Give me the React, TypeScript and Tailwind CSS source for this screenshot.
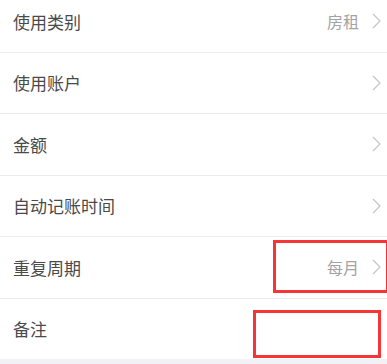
import React from "react"

const rows = [
  { label: "使用类别", value: "房租" },
  { label: "使用账户", value: "" },
  { label: "金额", value: "" },
  { label: "自动记账时间", value: "" },
  { label: "重复周期", value: "每月", mark: true },
]

function Chevron() {
  return (
    <svg width="9" height="16" viewBox="0 0 9 16" fill="none" className="shrink-0">
      <polyline points="1,1 8,8 1,15" stroke="#c4c4c4" strokeWidth="1.1" strokeLinejoin="round" />
    </svg>
  )
}

export default function App() {
  return (
    <div
      className="w-full h-[364px] overflow-hidden bg-[#f2f2f6]"
      style={{ fontFamily: '"Noto Sans CJK SC", "Noto Sans", sans-serif' }}
    >
      <div className="bg-white -mt-[9px]">
        {rows.map((r) => (
          <div
            key={r.label}
            className="relative flex items-center h-[61.5px] pl-[13px] pr-[6px] border-b border-[#ececec]"
          >
            <span className="flex-1 text-[17px] text-[#4a4a4a]">{r.label}</span>
            {r.value && <span className="text-[16px] text-[#a3a3a3] mr-[13px]">{r.value}</span>}
            <Chevron />
            {r.mark && (
              <div className="absolute left-[273px] -right-[2px] top-[3px] h-[53px] border-[3px] border-[#f43636]" />
            )}
          </div>
        ))}
        {/* Remarks */}
        <div className="relative flex items-center h-[60px] pl-[13px]">
          <span className="text-[17px] text-[#4a4a4a]">备注</span>
          <div className="absolute left-[253px] w-[128px] top-[11px] h-[48px] border-[3px] border-[#f43636]" />
        </div>
      </div>
    </div>
  )
}
